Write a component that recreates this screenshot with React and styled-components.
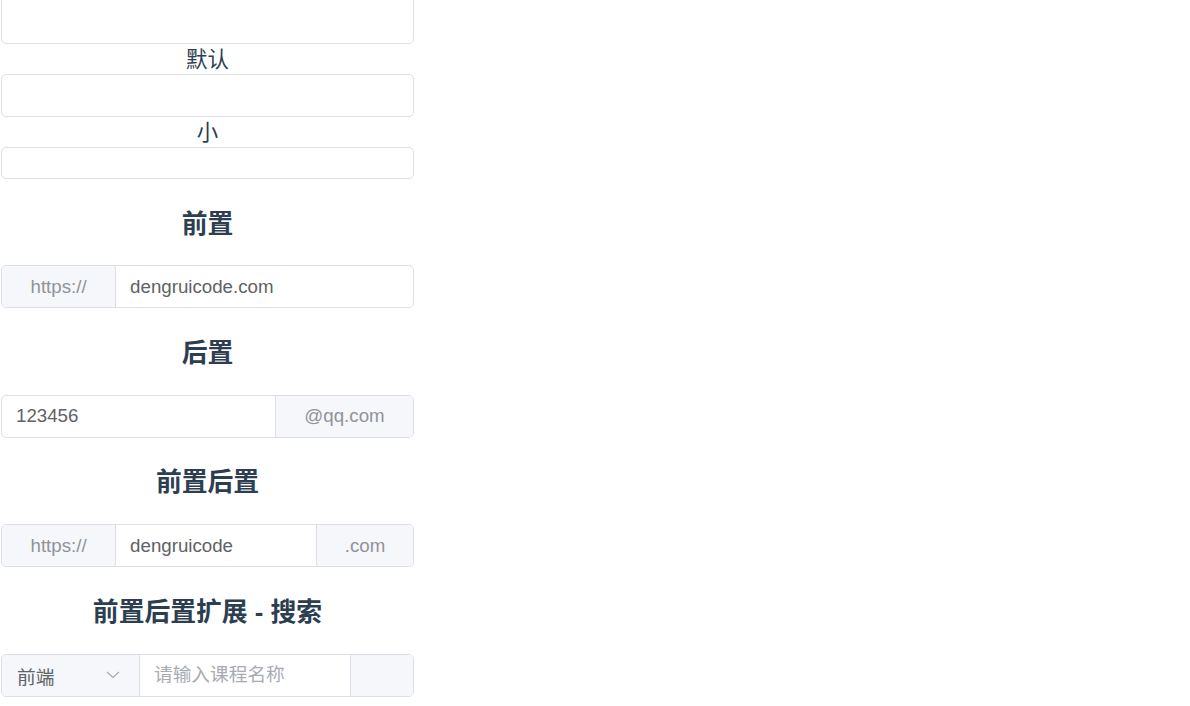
import React from 'react';
import styled, { createGlobalStyle } from 'styled-components';

const GlobalStyle = createGlobalStyle`
  html, body {
    margin: 0;
    padding: 0;
    background: #fff;
  }
  body {
    font-family: "Liberation Sans", "Noto Sans CJK SC", sans-serif;
    color: #2c3e50;
    overflow: hidden;
  }
`;

const Page = styled.div`
  width: 413px;
  margin: -9px 0 0 1px;
  display: flex;
  flex-direction: column;
  text-align: center;
`;

const Label = styled.div`
  height: 30px;
  line-height: 32px;
  font-size: 21.4px;
  color: #2c3e50;
`;

const Heading = styled.h3`
  margin: 0;
  height: 86.4px;
  box-sizing: border-box;
  padding-top: 26.5px;
  line-height: 36px;
  font-size: 25.8px;
  font-weight: 700;
  color: #2c3e50;
`;

const Group = styled.div`
  display: flex;
  align-items: stretch;
  height: ${p => p.$h || 43}px;
  box-sizing: border-box;
  border: 1px solid #dcdfe6;
  border-radius: 5px;
  overflow: hidden;
  background: #fff;
`;

const Field = styled.input`
  flex: 1;
  min-width: 0;
  border: none;
  outline: none;
  padding: 0 14px;
  background: transparent;
  font-family: "Liberation Sans", "Noto Sans CJK SC", sans-serif;
  font-size: 18.7px;
  color: #606266;

  &::placeholder {
    color: #a8abb2;
  }
`;

const Addon = styled.div`
  display: flex;
  align-items: center;
  justify-content: center;
  flex: none;
  box-sizing: border-box;
  width: ${p => (p.$w ? `${p.$w}px` : 'auto')};
  padding: 0 ${p => (p.$w ? 0 : 28.5)}px;
  background: #f5f7fa;
  color: #909399;
  font-size: 18.7px;
  border-left: ${p => (p.$side === 'right' ? '1px solid #dcdfe6' : 'none')};
  border-right: ${p => (p.$side === 'left' ? '1px solid #dcdfe6' : 'none')};
`;

const Select = styled.div`
  display: flex;
  align-items: center;
  justify-content: space-between;
  flex: none;
  width: 138px;
  box-sizing: border-box;
  padding: 0 19px 0 15px;
  background: #f5f7fa;
  border-right: 1px solid #dcdfe6;
  color: #606266;
  font-size: 18.7px;
`;

const Chevron = () => (
  <svg width="14" height="8" viewBox="0 0 14 8" fill="none">
    <polyline points="1,1 7,6.5 13,1" stroke="#a8abb2" strokeWidth="1.2" />
  </svg>
);

export default function App() {
  return (
    <>
      <GlobalStyle />
      <Page>
        <Group $h={53}>
          <Field readOnly />
        </Group>
        <Label>默认</Label>
        <Group>
          <Field readOnly />
        </Group>
        <Label>小</Label>
        <Group $h={32}>
          <Field readOnly />
        </Group>

        <Heading>前置</Heading>
        <Group>
          <Addon $side="left">https://</Addon>
          <Field readOnly defaultValue="dengruicode.com" />
        </Group>

        <Heading>后置</Heading>
        <Group>
          <Field readOnly defaultValue="123456" />
          <Addon $side="right" $w={138}>@qq.com</Addon>
        </Group>

        <Heading>前置后置</Heading>
        <Group>
          <Addon $side="left">https://</Addon>
          <Field readOnly defaultValue="dengruicode" />
          <Addon $side="right" $w={97}>.com</Addon>
        </Group>

        <Heading>前置后置扩展 - 搜索</Heading>
        <Group>
          <Select>
            <span>前端</span>
            <Chevron />
          </Select>
          <Field readOnly placeholder="请输入课程名称" />
          <Addon $side="right" $w={63} />
        </Group>
      </Page>
    </>
  );
}
